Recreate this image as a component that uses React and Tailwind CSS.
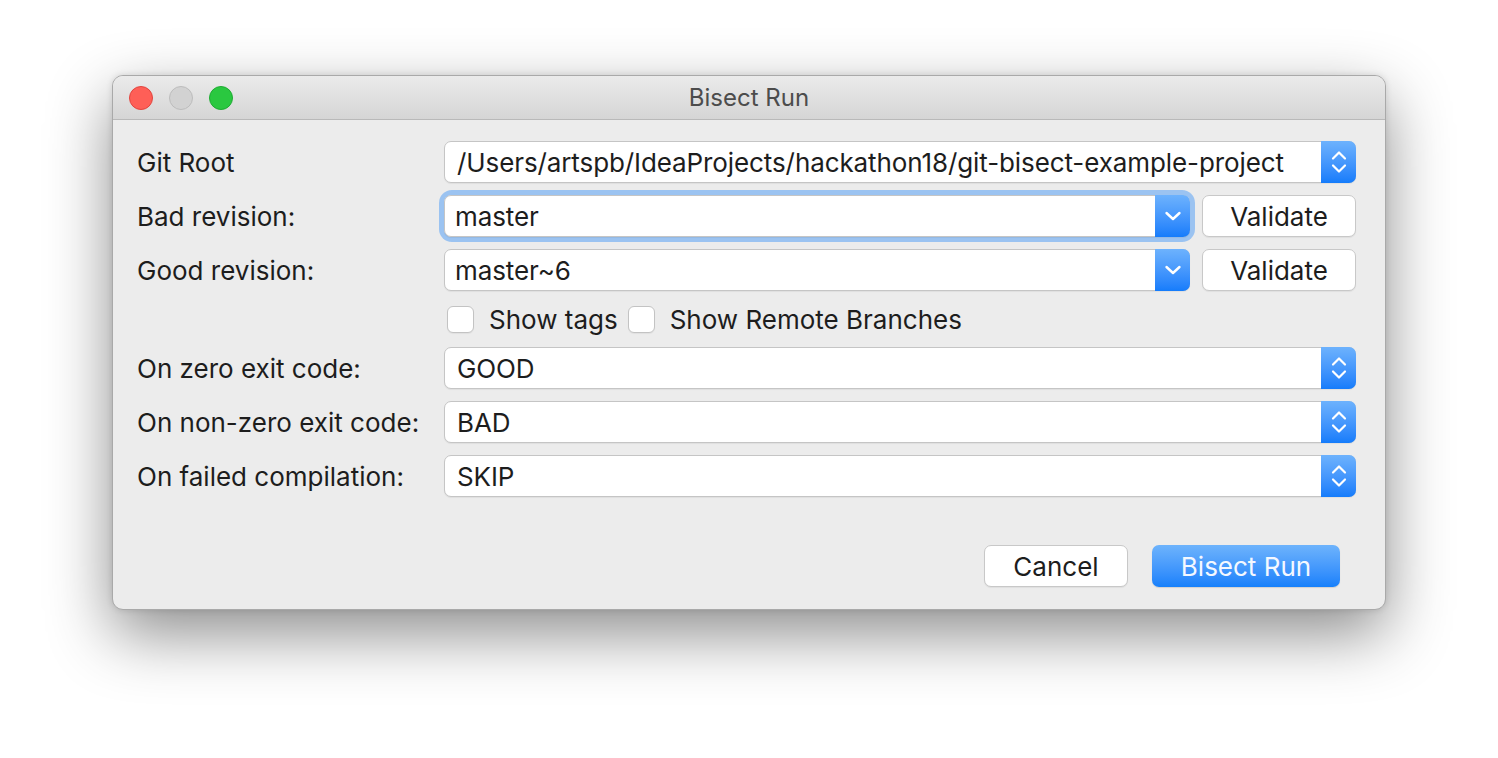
import React from 'react';

const font = { fontFamily: 'Inter, "Noto Sans", "Liberation Sans", sans-serif' };

const UpDown = () => (
    <svg width="16" height="26" viewBox="0 0 16 26" fill="none" stroke="white" strokeWidth="2.2" strokeLinecap="round" strokeLinejoin="round">
        <path d="M2 9.5 L8 3.5 L14 9.5" />
        <path d="M2 16.5 L8 22.5 L14 16.5" />
    </svg>
);

const Down = () => (
    <svg width="18" height="12" viewBox="0 0 18 12" fill="none" stroke="white" strokeWidth="2.4" strokeLinecap="round" strokeLinejoin="round">
        <path d="M2.5 3 L9 9 L15.5 3" />
    </svg>
);

const Select = ({ value, editable }) => (
    <div className="flex h-[42px] w-full items-stretch rounded-[7px] border border-[#c5c5c5] bg-white shadow-[0_1px_1px_rgba(0,0,0,0.06)]">
        <div className={`flex flex-1 items-center ${editable ? 'pl-[10px]' : 'pl-[12px]'} text-[26px] tracking-[-0.1px] text-[#1d1d1d]`}>{value}</div>
        <div className="-my-px -mr-px flex w-[35px] items-center justify-center rounded-r-[7px] bg-gradient-to-b from-[#6db2fd] to-[#147cfb]">
            {editable ? <Down /> : <UpDown />}
        </div>
    </div>
);

const PlainButton = ({ children, className = '' }) => (
    <button className={`flex h-[42px] items-center justify-center rounded-[7px] border border-[#c8c8c8] bg-white text-[26px] text-[#1d1d1d] shadow-[0_1px_1px_rgba(0,0,0,0.06)] ${className}`}>
        {children}
    </button>
);

const Label = ({ children }) => (
    <div className="flex h-[42px] items-center text-[26px] text-[#1d1d1d]">{children}</div>
);

const Checkbox = ({ label }) => (
    <label className="flex items-center gap-[15px]">
        <span className="h-[27px] w-[27px] rounded-[6px] border border-[#c3c3c3] bg-white shadow-[0_1px_1px_rgba(0,0,0,0.05)]" />
        <span className="text-[26px] text-[#1d1d1d]">{label}</span>
    </label>
);

export default function App() {
    return (
        <div className="flex min-h-[758px] w-full justify-center bg-white pt-[75px]" style={font}>
            <div className="flex h-[535px] w-[1274px] flex-col overflow-hidden rounded-[11px] border border-[#a9a9a9] bg-[#ececec] shadow-[0_24px_64px_rgba(0,0,0,0.45),0_0_6px_rgba(0,0,0,0.12)]">
                {/* title bar */}
                <div className="relative flex h-[44px] shrink-0 items-center border-b border-[#b9b9b9] bg-gradient-to-b from-[#ebebeb] to-[#d5d5d5] px-[16px]">
                    <div className="flex gap-[16px]">
                        <span className="h-[24px] w-[24px] rounded-full border border-[#e1453f] bg-[#fe5f57]" />
                        <span className="h-[24px] w-[24px] rounded-full border border-[#bcbcbc] bg-[#d2d2d2]" />
                        <span className="h-[24px] w-[24px] rounded-full border border-[#1fab33] bg-[#2ac840]" />
                    </div>
                    <div className="absolute inset-0 flex items-center justify-center text-[24px] text-[#4c4c4c]">Bisect Run</div>
                </div>

                {/* form */}
                <div className="grid grid-cols-[307px_1fr] gap-y-[12px] pl-[24px] pr-[29px] pt-[21px]">
                    <Label>Git Root</Label>
                    <Select value="/Users/artspb/IdeaProjects/hackathon18/git-bisect-example-project" />

                    <Label>Bad revision:</Label>
                    <div className="flex gap-[12px]">
                        <div className="flex-1 rounded-[8px] ring-[5px] ring-[#9bc3f1]">
                            <Select value="master" editable />
                        </div>
                        <PlainButton className="w-[154px]">Validate</PlainButton>
                    </div>

                    <Label>Good revision:</Label>
                    <div className="flex gap-[12px]">
                        <div className="flex-1">
                            <Select value="master~6" editable />
                        </div>
                        <PlainButton className="w-[154px]">Validate</PlainButton>
                    </div>

                    <div />
                    <div className="flex h-[32px] items-center gap-[10px] pl-[3px]">
                        <Checkbox label="Show tags" />
                        <Checkbox label="Show Remote Branches" />
                    </div>

                    <Label>On zero exit code:</Label>
                    <Select value="GOOD" />

                    <Label>On non-zero exit code:</Label>
                    <Select value="BAD" />

                    <Label>On failed compilation:</Label>
                    <Select value="SKIP" />
                </div>

                <div className="mt-[48px] flex justify-end gap-[24px] pr-[45px]">
                    <PlainButton className="w-[144px]">Cancel</PlainButton>
                    <button className="flex h-[42px] w-[188px] items-center justify-center rounded-[7px] bg-gradient-to-b from-[#6db3fc] to-[#1580fb] text-[26px] text-[#f4f8ff] shadow-[0_1px_1px_rgba(0,0,0,0.12)]">
                        Bisect Run
                    </button>
                </div>
            </div>
        </div>
    );
}
